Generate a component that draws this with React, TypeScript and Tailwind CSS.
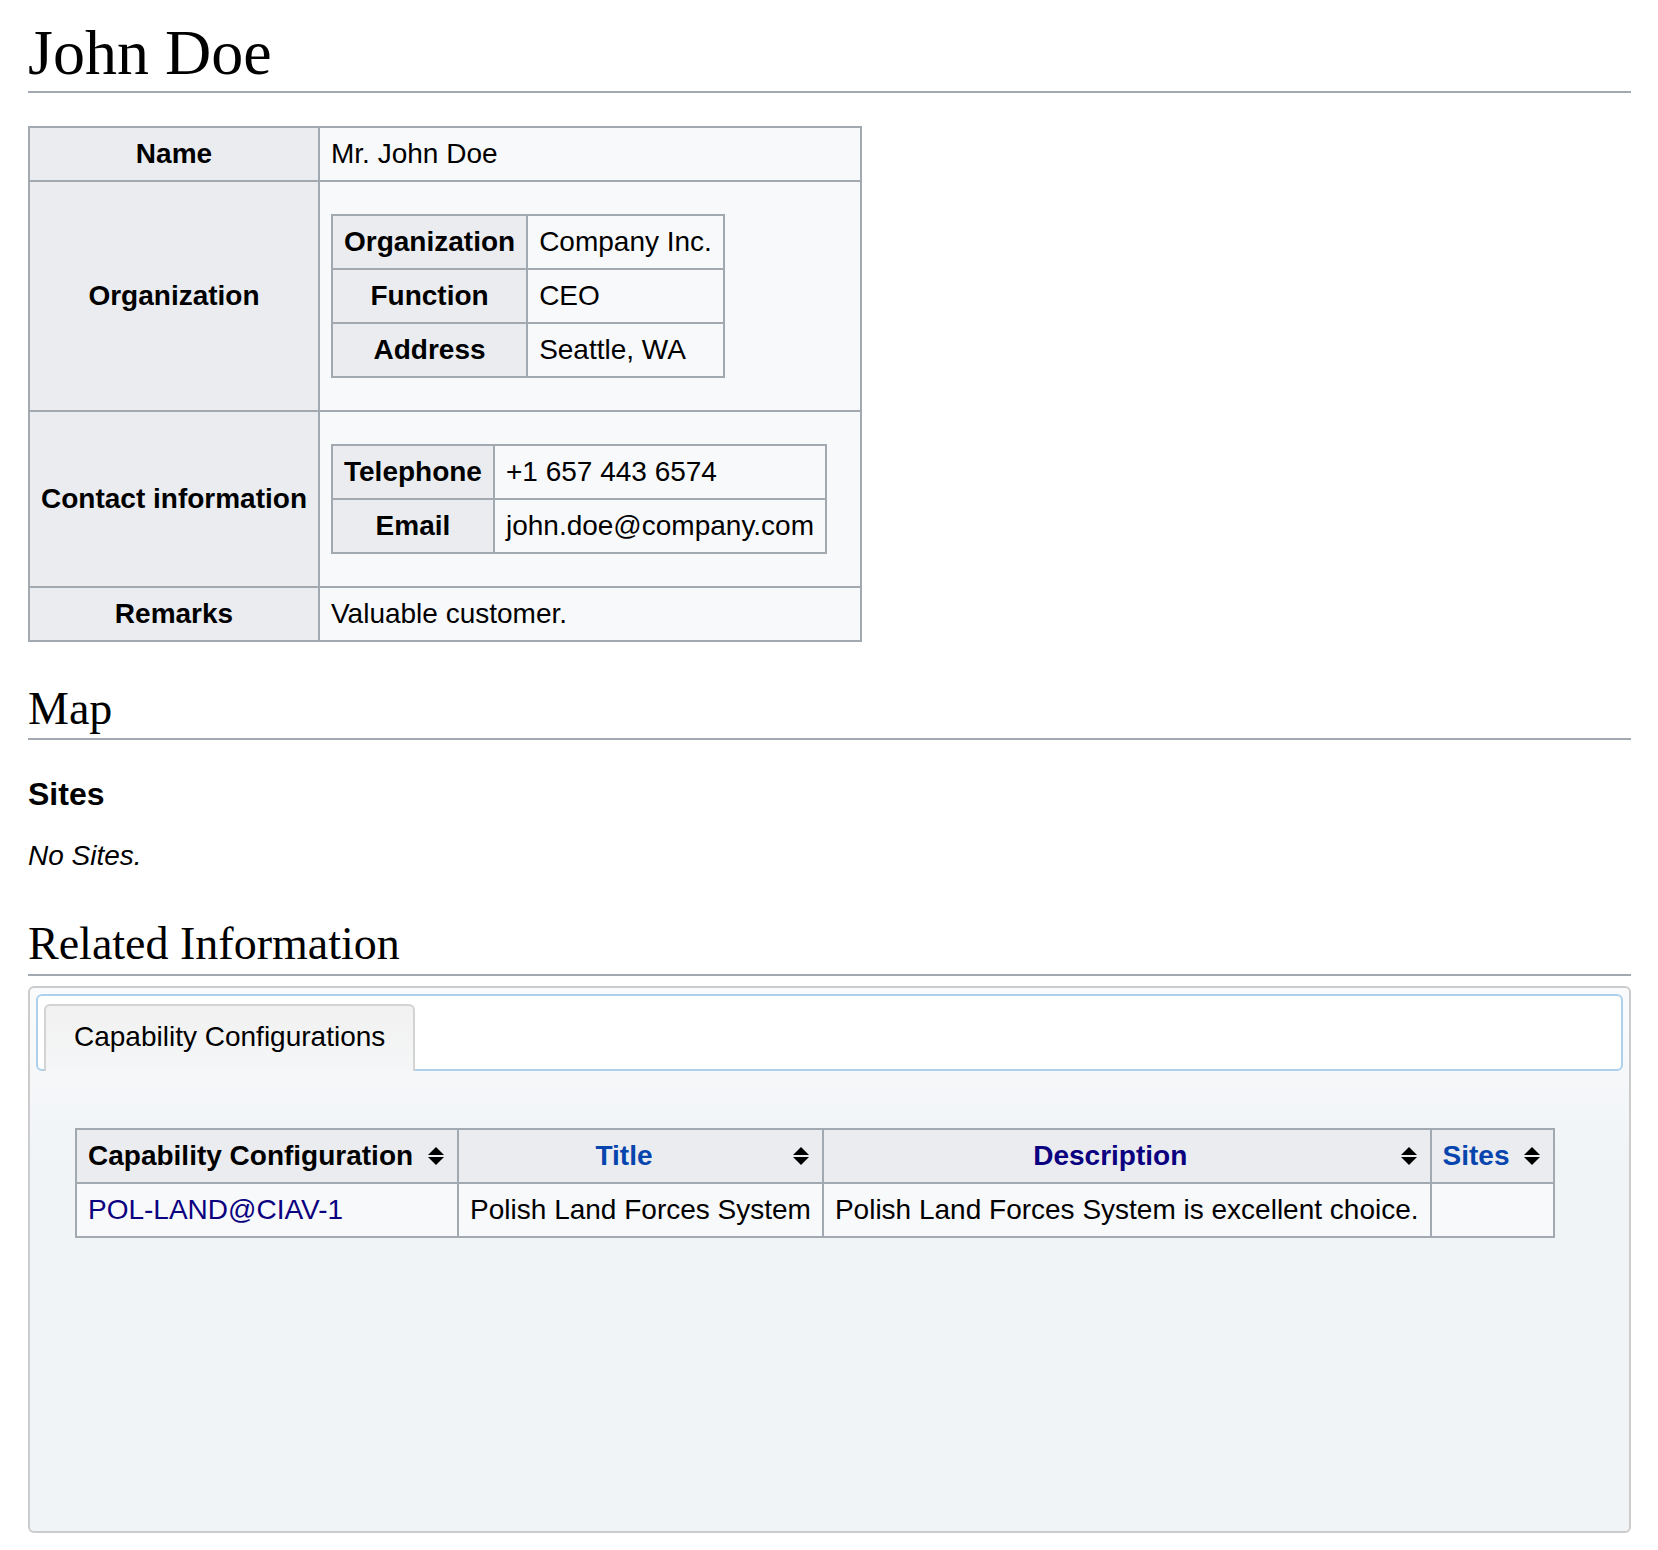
import React from "react";

const sans = { fontFamily: '"Liberation Sans", Arial, sans-serif' };
const serif = { fontFamily: '"Liberation Serif", "Times New Roman", serif' };

function SortArrows() {
  return (
    <svg
      className="absolute right-[13px] top-1/2 -translate-y-1/2"
      width="16"
      height="18"
      viewBox="0 0 16 18"
    >
      <polygon points="0,8 8,0 16,8" fill="#000" />
      <polygon points="0,10 16,10 8,18" fill="#000" />
    </svg>
  );
}

const th = "bg-[#eaecf0] border-2 border-[#a2a9b1] px-[11px] py-[6px] font-bold text-center whitespace-nowrap";
const td = "bg-[#f8f9fa] border-2 border-[#a2a9b1] px-[11px] py-[6px] text-left font-normal whitespace-nowrap";
const sortTh = "relative bg-[#eaecf0] border-2 border-[#a2a9b1] pl-[11px] pr-[44px] py-[6px] font-bold text-center whitespace-nowrap";

function InnerTable({ rows }: { rows: [string, string][] }) {
  return (
    <table className="border-collapse my-[26px]">
      <tbody>
        {rows.map(([k, v]) => (
          <tr key={k}>
            <th className={th}>{k}</th>
            <td className={td}>{v}</td>
          </tr>
        ))}
      </tbody>
    </table>
  );
}

export default function App() {
  return (
    <div className="min-h-screen bg-white text-black pl-[28px] pr-[27px] pt-[21px] pb-[20px]" style={sans}>
      <h1 className="text-[64px] leading-[64px] pb-[6px] border-b-2 border-[#a2a9b1] font-normal" style={serif}>
        John Doe
      </h1>

      <table className="border-collapse w-[834px] mt-[33px] text-[28px] leading-[40px]">
        <tbody>
          <tr>
            <th className={`${th} w-[290px]`}>Name</th>
            <td className={td}>Mr. John Doe</td>
          </tr>
          <tr>
            <th className={th}>Organization</th>
            <td className={td}>
              <InnerTable
                rows={[
                  ["Organization", "Company Inc."],
                  ["Function", "CEO"],
                  ["Address", "Seattle, WA"],
                ]}
              />
            </td>
          </tr>
          <tr>
            <th className={th}>Contact information</th>
            <td className={td}>
              <InnerTable
                rows={[
                  ["Telephone", "+1 657 443 6574"],
                  ["Email", "john.doe@company.com"],
                ]}
              />
            </td>
          </tr>
          <tr>
            <th className={th}>Remarks</th>
            <td className={td}>Valuable customer.</td>
          </tr>
        </tbody>
      </table>

      <h2 className="mt-[44px] text-[46px] leading-[46px] pb-[6px] border-b-2 border-[#a2a9b1] font-normal" style={serif}>
        Map
      </h2>

      <h3 className="mt-[38px] text-[32px] leading-[32px] font-bold">Sites</h3>
      <p className="mt-[32px] text-[28px] leading-[28px] italic">No Sites.</p>

      <h2 className="mt-[51px] text-[46px] leading-[46px] pb-[7px] border-b-2 border-[#a2a9b1] font-normal" style={serif}>
        Related Information
      </h2>

      <div className="mt-[10px] h-[547px] flex flex-col border-2 border-[#cccccc] rounded-[6px] p-[6px] bg-[linear-gradient(to_bottom,#fafbfc_0px,#f1f4f7_170px)]">
        <div className="flex items-end border-2 border-[#aed0ea] rounded-[6px] bg-white pt-[8px] px-[6px]">
          <div className="relative z-10 -mb-[2px] border-2 border-b-0 border-[#d3d3d3] rounded-t-[6px] bg-[linear-gradient(to_bottom,#f1f1f1,#f5f6f7)] px-[28px] pt-[15px] pb-[18px] text-[28px] leading-[32px]">
            Capability Configurations
          </div>
        </div>

        <div className="flex-1 px-[39px] pt-[29px]">
          <table className="border-collapse mt-[28px] text-[28px] leading-[40px]">
            <thead>
              <tr>
                <th className={sortTh}>
                  Capability Configuration
                  <SortArrows />
                </th>
                <th className={`${sortTh} text-[#0645ad]`}>
                  Title
                  <SortArrows />
                </th>
                <th className={`${sortTh} text-[#0b0080]`}>
                  Description
                  <SortArrows />
                </th>
                <th className={`${sortTh} text-[#0645ad]`}>
                  Sites
                  <SortArrows />
                </th>
              </tr>
            </thead>
            <tbody>
              <tr>
                <td className={`${td} text-[#0b0080]`}>POL-LAND@CIAV-1</td>
                <td className={td}>Polish Land Forces System</td>
                <td className={td}>Polish Land Forces System is excellent choice.</td>
                <td className={td}></td>
              </tr>
            </tbody>
          </table>
        </div>
      </div>
    </div>
  );
}
